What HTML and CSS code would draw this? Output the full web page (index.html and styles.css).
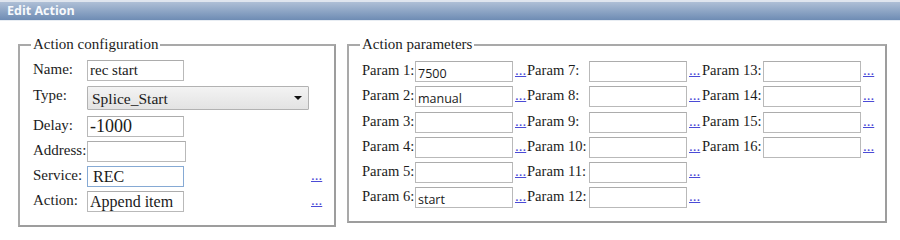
FILE: index.html
```html
<!DOCTYPE html>
<html>
<head>
<meta charset="utf-8">
<link rel="stylesheet" href="styles.css">
</head>
<body>
<div class="titlebar">Edit Action</div>
<div class="panels">
  <fieldset class="box box-config">
    <legend>Action configuration</legend>
    <div class="config-grid">
      <label class="lbl">Name:</label>
      <div class="field"><input class="txt w97 f15" value="rec start"></div>
      <span></span>

      <label class="lbl">Type:</label>
      <div class="field"><div class="select"><span class="sel-text">Splice_Start</span><span class="sel-arrow"></span></div></div>
      <span></span>

      <label class="lbl">Delay:</label>
      <div class="field"><input class="txt w97 f18" value="-1000"></div>
      <span></span>

      <label class="lbl">Address:</label>
      <div class="field"><input class="txt w99" value=""></div>
      <span></span>

      <label class="lbl">Service:</label>
      <div class="field"><input class="txt w97 f16 focus" value="REC"></div>
      <a class="more" href="#">...</a>

      <label class="lbl">Action:</label>
      <div class="field"><input class="txt w97 f16" value="Append item"></div>
      <a class="more" href="#">...</a>
    </div>
  </fieldset>

  <fieldset class="box box-params">
    <legend>Action parameters</legend>
    <div class="param-grid">
      <label class="lbl">Param 1:</label><div class="field"><input class="txt pv" value="7500"></div><a class="more" href="#">...</a>
      <label class="lbl">Param 7:</label><div class="field"><input class="txt pv" value=""></div><a class="more" href="#">...</a>
      <label class="lbl">Param 13:</label><div class="field"><input class="txt pv" value=""></div><a class="more" href="#">...</a>

      <label class="lbl">Param 2:</label><div class="field"><input class="txt pv" value="manual"></div><a class="more" href="#">...</a>
      <label class="lbl">Param 8:</label><div class="field"><input class="txt pv" value=""></div><a class="more" href="#">...</a>
      <label class="lbl">Param 14:</label><div class="field"><input class="txt pv" value=""></div><a class="more" href="#">...</a>

      <label class="lbl">Param 3:</label><div class="field"><input class="txt pv" value=""></div><a class="more" href="#">...</a>
      <label class="lbl">Param 9:</label><div class="field"><input class="txt pv" value=""></div><a class="more" href="#">...</a>
      <label class="lbl">Param 15:</label><div class="field"><input class="txt pv" value=""></div><a class="more" href="#">...</a>

      <label class="lbl">Param 4:</label><div class="field"><input class="txt pv" value=""></div><a class="more" href="#">...</a>
      <label class="lbl">Param 10:</label><div class="field"><input class="txt pv" value=""></div><a class="more" href="#">...</a>
      <label class="lbl">Param 16:</label><div class="field"><input class="txt pv" value=""></div><a class="more" href="#">...</a>

      <label class="lbl">Param 5:</label><div class="field"><input class="txt pv" value=""></div><a class="more" href="#">...</a>
      <label class="lbl">Param 11:</label><div class="field"><input class="txt pv" value=""></div><a class="more" href="#">...</a>
      <span></span><span></span><span></span>

      <label class="lbl">Param 6:</label><div class="field"><input class="txt pv" value="start"></div><a class="more" href="#">...</a>
      <label class="lbl">Param 12:</label><div class="field"><input class="txt pv" value=""></div><a class="more" href="#">...</a>
      <span></span><span></span><span></span>
    </div>
  </fieldset>
</div>
</body>
</html>
```
FILE: styles.css
```css
* { box-sizing: border-box; }
html, body { margin: 0; padding: 0; background: #ffffff; }
body {
  width: 900px;
  height: 240px;
  overflow: hidden;
  font-family: "Liberation Serif", "Times New Roman", serif;
  color: #1e1e1e;
}
.titlebar {
  height: 21px;
  padding-left: 7px;
  border-top: 2px solid #dfe5ee;
  background: linear-gradient(#aebfd6, #6e8cb4);
  color: #f7f9fc;
  font-family: "Open Sans", "DejaVu Sans", sans-serif;
  font-weight: bold;
  font-size: 12.5px;
  line-height: 18px;
  border-bottom: 1px solid #e8edf3;
}
.panels {
  display: flex;
  align-items: flex-start;
  gap: 11px;
  padding-left: 18px;
  margin-top: 15px;
}
.box {
  margin: 0;
  border: 2px solid #a9a9a9;
  border-right-color: #9d9d9d;
  border-bottom-color: #9d9d9d;
  padding: 0 8px 0 11px;
  min-width: 0;
}
.box legend {
  padding: 0 2px;
  font-size: 15px;
  line-height: 17px;
  color: #1c1c1c;
}
.box-config { width: 318px; height: 191px; }
.box-params { width: 540px; height: 187px; }

.config-grid {
  display: grid;
  margin-top: 7px;
  margin-left: 2px;
  grid-template-columns: 54px 224px 24px;
  grid-template-rows: 26px 30px 25px 25px 25px 25px;
}
.param-grid {
  display: grid;
  margin-top: 8px;
  margin-left: 2px;
  grid-template-columns: 53px 98px 14px 62px 98px 15px 61px 98px 14px;
  grid-auto-rows: 25.3px;
}
.lbl {
  font-size: 15px;
  line-height: 17px;
  margin-top: 1px;
  white-space: nowrap;
  color: #1c1c1c;
}
.param-grid .lbl { font-size: 14.6px; }
.field { display: flex; }
.txt {
  height: 21px;
  width: 98px;
  border: 1px solid #b9b9b9;
  border-top-color: #acacac;
  background: #fff;
  padding: 0 0 0 2px;
  margin: 0;
  font-family: "Liberation Serif", "Times New Roman", serif;
  color: #1a1a1a;
  outline: none;
}
.w97 { width: 97px; }
.w99 { width: 99px; }
.f15 { font-size: 15px; }
.f16 { font-size: 16px; }
.f18 { font-size: 18px; }
.focus { border-color: #86aad4; padding-left: 5px; }
.pv {
  font-family: "Open Sans", "Segoe UI", sans-serif;
  font-size: 12.5px;
  padding-top: 3px;
}
.select {
  width: 222px;
  height: 24px;
  border: 1px solid #b2b2b2;
  border-radius: 1px;
  background: linear-gradient(#f3f3f3, #e3e3e3);
  display: flex;
  align-items: center;
  justify-content: space-between;
  padding: 0 6px 0 4px;
}
.sel-text { font-size: 15.5px; color: #1a1a1a; padding-top: 2px; }
.sel-arrow {
  width: 0; height: 0;
  border-left: 4px solid transparent;
  border-right: 4px solid transparent;
  border-top: 4px solid #111;
}
.more {
  font-size: 15px;
  line-height: 17px;
  margin-top: 1px;
  color: #4b4bd6;
  text-decoration: underline;
  padding-left: 2px;
}
.config-grid .more { padding-left: 0; }
```
